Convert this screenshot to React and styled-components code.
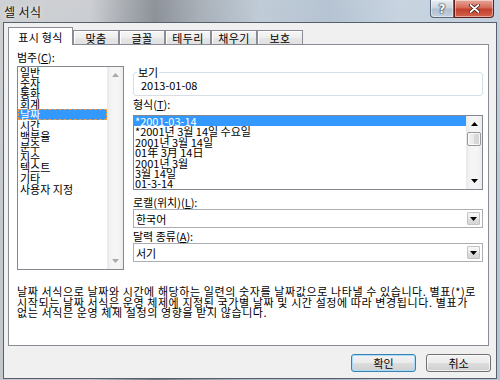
import React from "react";
import styled, { createGlobalStyle } from "styled-components";

const GlobalStyle = createGlobalStyle`
  html, body {
    margin: 0;
    padding: 0;
    background: #fff;
  }
  body {
    font-family: "Noto Sans CJK KR", "Noto Sans", sans-serif;
    font-size: 11px;
    color: #000;
  }
`;

const Window = styled.div`
  width: 500px;
  height: 380px;
  box-sizing: border-box;
  padding: 0 3px 1px 3px;
  display: flex;
  flex-direction: column;
  overflow: hidden;
  background: linear-gradient(
      180deg,
      rgba(255, 255, 255, 0.18) 0%,
      rgba(255, 255, 255, 0) 60%
    ),
    linear-gradient(
      90deg,
      #c4c7cb 0%,
      #c1c4c9 18%,
      #969ba2 25%,
      #767c84 31%,
      #97a0aa 40%,
      #b3c1cf 52%,
      #a7b7c9 66%,
      #bccbda 80%,
      #b7c6d6 100%
    );
`;

const TitleBar = styled.div`
  height: 22px;
  flex-shrink: 0;
  display: flex;
  align-items: flex-start;
`;

const Title = styled.div`
  padding: 5px 0 0 1px;
  font-size: 12px;
  line-height: 14px;
  letter-spacing: 0.4px;
  color: #141414;
  text-shadow: 0 0 5px rgba(255, 255, 255, 0.9);
`;

const Controls = styled.div`
  margin-left: auto;
  margin-right: 3px;
  display: flex;
`;

const CaptionButton = styled.div`
  width: ${(p) => p.$w}px;
  height: 18px;
  box-sizing: border-box;
  border: 1px solid ${(p) => (p.$close ? "#5e2016" : "#56677a")};
  border-top: none;
  border-radius: ${(p) => (p.$close ? "0 0 4px 0" : "0 0 0 4px")};
  background: ${(p) =>
    p.$close
      ? "linear-gradient(180deg, #e6a79b 0%, #d56b58 45%, #c23f2c 55%, #d2644f 100%)"
      : "linear-gradient(180deg, #e7edf3 0%, #ccd6e1 45%, #b2c0cf 55%, #c5d2df 100%)"};
  box-shadow: inset 0 0 0 1px rgba(255, 255, 255, 0.45);
  display: flex;
  align-items: center;
  justify-content: center;
  font-family: "DejaVu Sans", sans-serif;
  font-weight: bold;
  font-size: 12px;
  color: #fff;
  text-shadow: 0 0 1px #24313f, 0 0 1px #24313f, 0 0 2px #24313f;
`;

const Client = styled.div`
  flex: 1;
  background: #f0f0f0;
  border: 1px solid #55606c;
  display: flex;
  flex-direction: column;
  padding: 4px 0 0 4px;
`;

const TabStrip = styled.div`
  height: 17px;
  display: flex;
  align-items: flex-end;
  position: relative;
  z-index: 1;
`;

const Tab = styled.div`
  box-sizing: border-box;
  width: ${(p) => (p.$active ? 65 : 46)}px;
  height: ${(p) => (p.$active ? 18 : 14)}px;
  margin-bottom: ${(p) => (p.$active ? -1 : 0)}px;
  border: 1px solid #898c95;
  border-bottom: none;
  background: ${(p) =>
    p.$active
      ? "#fff"
      : "linear-gradient(180deg, #f6f6f6 0%, #eeeeee 50%, #e6e6e6 51%, #e1e1e1 100%)"};
  box-shadow: ${(p) =>
    p.$active ? "none" : "inset 1px 1px 0 rgba(255,255,255,0.9)"};
  display: flex;
  justify-content: center;
  padding-top: ${(p) => (p.$active ? 3 : 1)}px;
  font-size: 11px;
  line-height: 12px;
  letter-spacing: 0.3px;
`;

const Panel = styled.div`
  width: 481px;
  height: 302px;
  box-sizing: border-box;
  background: #fff;
  border: 1px solid #898c95;
  padding: 7px 4px 0 8px;
`;

const TopGrid = styled.div`
  display: grid;
  grid-template-columns: 107px 350px;
  column-gap: 9px;
  align-items: start;
`;

const Column = styled.div`
  display: flex;
  flex-direction: column;
`;

const Label = styled.div`
  height: 11px;
  line-height: 11px;
  font-size: 11px;
  white-space: nowrap;
  margin-top: ${(p) => p.$mt || 0}px;
  margin-bottom: ${(p) => p.$mb || 0}px;
`;

const Accel = styled.span`
  text-decoration: underline;
  text-underline-offset: 1px;
`;

const ListBox = styled.div`
  height: ${(p) => p.$h}px;
  box-sizing: border-box;
  border: 1px solid #828790;
  background: #fff;
  display: flex;
`;

const ListItems = styled.div`
  flex: 1;
  min-width: 0;
`;

const ListItem = styled.div`
  height: ${(p) => p.$rh}px;
  line-height: ${(p) => p.$rh}px;
  padding-left: ${(p) => p.$pl}px;
  white-space: nowrap;
  font-size: 11px;
  box-sizing: border-box;
  background: ${(p) => (p.$selected ? "#3399ff" : "transparent")};
  color: ${(p) => (p.$selected ? "#fff" : "#000")};
  outline: ${(p) => (p.$focus ? "1px dashed #f49a3c" : "none")};
  outline-offset: -1px;
`;

const ScrollBar = styled.div`
  width: 16px;
  flex-shrink: 0;
  display: flex;
  flex-direction: column;
  background: linear-gradient(90deg, #e9e9e9 0%, #f5f5f5 30%, #f5f5f5 70%, #ececec 100%);
`;

const ScrollArrow = styled.div`
  height: 16px;
  display: flex;
  align-items: center;
  justify-content: center;
`;

const ScrollTrack = styled.div`
  flex: 1;
`;

const Thumb = styled.div`
  margin: 0 1px;
  height: 14px;
  box-sizing: border-box;
  border: 1px solid #979797;
  border-radius: 2px;
  background: linear-gradient(90deg, #f3f3f3 0%, #e8e8e8 50%, #d9d9d9 51%, #d4d4d4 100%);
  box-shadow: inset 0 0 0 1px rgba(255, 255, 255, 0.8);
`;

const GroupBox = styled.fieldset`
  margin: 14px 0 0;
  padding: 0 6px 3px 7px;
  border: 1px solid #d5dfe5;
  border-radius: 3px;
  min-width: 0;
`;

const GroupLegend = styled.legend`
  margin-left: -4px;
  padding: 0 1px;
  font-size: 11px;
  line-height: 12px;
`;

const GroupValue = styled.div`
  font-size: 11px;
  line-height: 14px;
`;

const Select = styled.div`
  height: 19px;
  box-sizing: border-box;
  border: 1px solid #abadb3;
  display: flex;
  align-items: center;
  padding: 0 2px 0 2px;
  font-size: 11px;
  line-height: 12px;
`;

const SelectArrow = styled.div`
  margin-left: auto;
  width: 13px;
  height: 13px;
  box-sizing: border-box;
  border: 1px solid #c3c3c3;
  border-radius: 1px;
  background: linear-gradient(180deg, #f8f8f8 0%, #ececec 50%, #dedede 51%, #d6d6d6 100%);
  display: flex;
  align-items: center;
  justify-content: center;
`;

const Description = styled.div`
  margin-top: 16px;
  font-size: 11px;
  line-height: 10.5px;
  letter-spacing: 0.6px;
  white-space: nowrap;
`;

const ButtonRow = styled.div`
  display: flex;
  justify-content: flex-end;
  gap: 10px;
  padding: 8px 5px 0 0;
`;

const Button = styled.div`
  width: 65px;
  height: 18px;
  box-sizing: border-box;
  border: 1px solid ${(p) => (p.$default ? "#3c7fb1" : "#707070")};
  border-radius: 3px;
  background: linear-gradient(180deg, #f2f2f2 0%, #ebebeb 50%, #dddddd 51%, #cfcfcf 100%);
  box-shadow: inset 0 0 0 1px
    ${(p) => (p.$default ? "rgba(160, 220, 250, 0.9)" : "rgba(255,255,255,0.7)")};
  display: flex;
  align-items: center;
  justify-content: center;
  font-size: 11px;
  line-height: 12px;
`;

const Arrow = ({ up, color = "#000" }) => (
  <svg width="7" height="4" viewBox="0 0 7 4">
    <polygon
      points={up ? "3.5,0 7,4 0,4" : "0,0 7,0 3.5,4"}
      fill={color}
    />
  </svg>
);

const categories = [
  "일반",
  "숫자",
  "통화",
  "회계",
  "날짜",
  "시간",
  "백분율",
  "분수",
  "지수",
  "텍스트",
  "기타",
  "사용자 지정",
];

const formats = [
  "*2001-03-14",
  "*2001년 3월 14일 수요일",
  "2001년 3월 14일",
  "01年 3月 14日",
  "2001년 3월",
  "3월 14일",
  "01-3-14",
];

const tabs = ["표시 형식", "맞춤", "글꼴", "테두리", "채우기", "보호"];

export default function App() {
  return (
    <>
      <GlobalStyle />
      <Window>
        <TitleBar>
          <Title>셀 서식</Title>
          <Controls>
            <CaptionButton $w={24}>?</CaptionButton>
            <CaptionButton $w={40} $close>
              <svg width="11" height="9" viewBox="0 0 11 9">
                <path
                  d="M1.5 1 L9.5 8 M9.5 1 L1.5 8"
                  stroke="#3a1610"
                  strokeWidth="3.4"
                  strokeLinecap="round"
                />
                <path
                  d="M1.5 1 L9.5 8 M9.5 1 L1.5 8"
                  stroke="#fff"
                  strokeWidth="1.8"
                  strokeLinecap="round"
                />
              </svg>
            </CaptionButton>
          </Controls>
        </TitleBar>

        <Client>
          <TabStrip>
            {tabs.map((t, i) => (
              <Tab key={t} $active={i === 0}>
                {t}
              </Tab>
            ))}
          </TabStrip>

          <Panel>
            <TopGrid>
              <Column>
                <Label $mb={3}>
                  범주(<Accel>C</Accel>):
                </Label>
                <ListBox $h={204}>
                  <ListItems>
                    {categories.map((c) => (
                      <ListItem
                        key={c}
                        $rh={10.6}
                        $pl={2}
                        $selected={c === "날짜"}
                        $focus={c === "날짜"}
                      >
                        {c}
                      </ListItem>
                    ))}
                  </ListItems>
                  <ScrollBar>
                    <ScrollArrow>
                      <Arrow up color="#a8a8a8" />
                    </ScrollArrow>
                    <ScrollTrack />
                    <ScrollArrow>
                      <Arrow color="#a8a8a8" />
                    </ScrollArrow>
                  </ScrollBar>
                </ListBox>
              </Column>

              <Column>
                <GroupBox>
                  <GroupLegend>보기</GroupLegend>
                  <GroupValue>2013-01-08</GroupValue>
                </GroupBox>

                <Label $mt={3} $mb={5}>
                  형식(<Accel>T</Accel>):
                </Label>
                <ListBox $h={75}>
                  <ListItems>
                    {formats.map((f, i) => (
                      <ListItem key={f} $rh={10.4} $pl={1} $selected={i === 0}>
                        {f}
                      </ListItem>
                    ))}
                  </ListItems>
                  <ScrollBar>
                    <ScrollArrow>
                      <Arrow up />
                    </ScrollArrow>
                    <ScrollTrack>
                      <Thumb />
                    </ScrollTrack>
                    <ScrollArrow>
                      <Arrow />
                    </ScrollArrow>
                  </ScrollBar>
                </ListBox>

                <Label $mt={7} $mb={1}>
                  로캘(위치)(<Accel>L</Accel>):
                </Label>
                <Select>
                  한국어
                  <SelectArrow>
                    <Arrow />
                  </SelectArrow>
                </Select>

                <Label $mt={3} $mb={1}>
                  달력 종류(<Accel>A</Accel>):
                </Label>
                <Select>
                  서기
                  <SelectArrow>
                    <Arrow />
                  </SelectArrow>
                </Select>
              </Column>
            </TopGrid>

            <Description>
              날짜 서식으로 날짜와 시간에 해당하는 일련의 숫자를 날짜값으로
              나타낼 수 있습니다. 별표(*)로
              <br />
              시작되는 날짜 서식은 운영 체제에 지정된 국가별 날짜 및 시간
              설정에 따라 변경됩니다. 별표가
              <br />
              없는 서식은 운영 체제 설정의 영향을 받지 않습니다.
            </Description>
          </Panel>

          <ButtonRow>
            <Button $default>확인</Button>
            <Button>취소</Button>
          </ButtonRow>
        </Client>
      </Window>
    </>
  );
}
